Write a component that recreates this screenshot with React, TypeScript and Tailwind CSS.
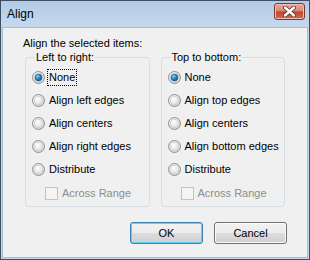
import { useState } from 'react';

type Opt = { id: string; label: string };

const leftOpts: Opt[] = [
  { id: 'none', label: 'None' },
  { id: 'left', label: 'Align left edges' },
  { id: 'center', label: 'Align centers' },
  { id: 'right', label: 'Align right edges' },
  { id: 'dist', label: 'Distribute' },
];

const topOpts: Opt[] = [
  { id: 'none', label: 'None' },
  { id: 'top', label: 'Align top edges' },
  { id: 'center', label: 'Align centers' },
  { id: 'bottom', label: 'Align bottom edges' },
  { id: 'dist', label: 'Distribute' },
];

const Radio = ({ checked }: { checked: boolean }) => (
  <svg width="13" height="13" viewBox="0 0 13 13" className="shrink-0">
    <defs>
      <radialGradient id="rfill" cx="0.4" cy="0.35" r="0.7">
        <stop offset="0" stopColor="#ffffff" />
        <stop offset="1" stopColor="#d4d4d4" />
      </radialGradient>
      <radialGradient id="rdot" cx="0.35" cy="0.3" r="0.8">
        <stop offset="0" stopColor="#8fd2f7" />
        <stop offset="0.5" stopColor="#2a83c8" />
        <stop offset="1" stopColor="#0f4c86" />
      </radialGradient>
    </defs>
    <circle cx="6.5" cy="6.5" r="6" fill="url(#rfill)" stroke="#8e8f8f" strokeWidth="1" />
    <circle cx="6.5" cy="6.5" r="4.2" fill="none" stroke="#c9c9c9" strokeWidth="0.8" />
    {checked ? <circle cx="6.5" cy="6.5" r="3.4" fill="url(#rdot)" stroke="#1d4f7c" strokeWidth="0.6" /> : null}
  </svg>
);

const Group = ({
  title,
  opts,
  value,
  focused,
  onPick,
}: {
  title: string;
  opts: Opt[];
  value: string;
  focused: boolean;
  onPick: (id: string) => void;
}) => (
  <fieldset className="flex-1 border border-[#d5dfe5] rounded-[3px] pl-[6px] pb-[1px]">
    <legend className="ml-[3px] px-[1px] leading-[15px]">{title}</legend>
    <div className="flex flex-col pt-[1px]">
      {opts.map((o) => (
        <div
          key={o.id}
          className="h-[23px] flex items-center gap-[4px] cursor-default"
          onClick={() => onPick(o.id)}
        >
          <Radio checked={value === o.id} />
          <span
            className={
              focused && value === o.id
                ? 'outline-1 outline-dotted outline-black outline-offset-[1px] leading-[13px]'
                : 'leading-[13px]'
            }
          >
            {o.label}
          </span>
        </div>
      ))}
      <div className="h-[24px] flex items-center gap-[4px] pl-[13px] text-[#8d8d8d]">
        <span className="w-[13px] h-[13px] border border-[#c3c3c3] bg-[#f4f4f4] shrink-0" />
        <span>Across Range</span>
      </div>
    </div>
  </fieldset>
);

export default function App() {
  const [horiz, setHoriz] = useState('none');
  const [vert, setVert] = useState('none');

  return (
    <div
      className="w-[310px] h-[260px] flex flex-col border border-[#3e4d61] bg-[#c3d7ed] text-[11px] text-black"
      style={{ fontFamily: '"Liberation Sans", Arial, sans-serif' }}
    >
      <div className="h-[26px] flex items-center justify-between pl-[6px] pr-[4px] bg-[linear-gradient(#b3cbe6,#c6d9ee)]">
        <span className="text-[12px] text-[#000]">Align</span>
        <button className="w-[31px] h-[17px] mb-[5px] flex items-center justify-center rounded-[3px] border border-[#7a3a2e] bg-[linear-gradient(#eaa897,#d98a77_45%,#c2452e_52%,#d06a54)] shadow-[inset_0_0_0_1px_#f0bfb2]">
          <svg width="13" height="11" viewBox="0 0 13 11">
            <path d="M2 1.5 L11 9.5 M11 1.5 L2 9.5" stroke="#5b2a22" strokeWidth="4" strokeLinecap="round" />
            <path d="M2 1.5 L11 9.5 M11 1.5 L2 9.5" stroke="#ffffff" strokeWidth="2.4" strokeLinecap="round" />
          </svg>
        </button>
      </div>
      <div className="flex-1 mx-[1px] mb-[1px] bg-[#f0f0f0] border border-[#a7bcd5] flex flex-col pl-[19px] pr-[20px] pt-[8px]">
        <div className="leading-[15px] pl-[1px]">Align the selected items:</div>
        <div className="flex gap-[11px] mt-[-1px] pl-[3px] pr-[2px]">
          <Group title="Left to right:" opts={leftOpts} value={horiz} focused onPick={setHoriz} />
          <Group title="Top to bottom:" opts={topOpts} value={vert} focused={false} onPick={setVert} />
        </div>
        <div className="flex justify-end gap-[11px] mt-[15px]">
          <button className="w-[73px] h-[22px] rounded-[3px] border border-[#3c7fb1] shadow-[inset_0_0_0_1px_#5fd3f8] bg-[linear-gradient(#f2f2f2,#ebebeb_50%,#dddddd_51%,#cfcfcf)]">
            OK
          </button>
          <button className="w-[73px] h-[22px] rounded-[3px] border border-[#707070] shadow-[inset_0_0_0_1px_#fcfcfc] bg-[linear-gradient(#f2f2f2,#ebebeb_50%,#dddddd_51%,#cfcfcf)]">
            Cancel
          </button>
        </div>
      </div>
    </div>
  );
}
